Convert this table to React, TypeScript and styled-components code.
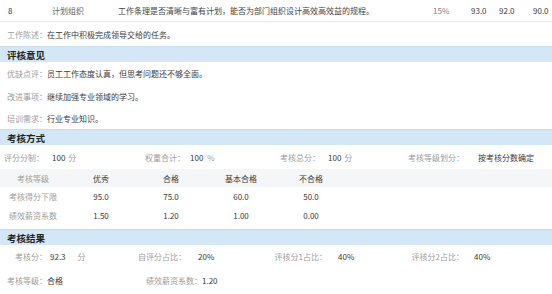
import React from 'react';
import styled, { createGlobalStyle } from 'styled-components';

const GlobalStyle = createGlobalStyle`
  html, body {
    margin: 0;
    padding: 0;
    background: #ffffff;
  }
  body {
    font-family: "Noto Sans CJK SC", "Noto Sans", sans-serif;
    font-size: 8px;
    color: #3a3a3a;
  }
`;

const Page = styled.div`
  width: 552px;
  height: 294px;
  overflow: hidden;
  background: #fff;
`;

const ItemRow = styled.div`
  height: 21px;
  border-bottom: 1px solid #e6e6e6;
  white-space: nowrap;
`;

const ItemCells = styled.div`
  position: relative;
  width: 100%;
  height: 100%;
  display: flex;
  align-items: center;
`;

// cells of the table row whose top is cut off in the screenshot
const ItemCell = styled.span<{ left: number; tone?: string }>`
  position: absolute;
  left: ${({ left }) => left}px;
  color: ${({ tone }) => tone || '#3a3a3a'};
`;

const Line = styled.div<{ h: number }>`
  display: flex;
  align-items: center;
  height: ${({ h }) => h}px;
  padding-left: 7px;
  white-space: nowrap;
`;

const Label = styled.span<{ offset?: number }>`
  margin-left: ${({ offset }) => offset || 0}px;
  color: #9d9d9d;
`;

const Value = styled.span`
  color: #3a3a3a;
`;

const SectionHeader = styled.div<{ h: number }>`
  display: flex;
  align-items: center;
  height: ${({ h }) => h}px;
  padding-left: 7px;
  background: #d3e7f6;
  border-top: 1px solid #c9dcec;
  font-size: 9.5px;
  font-weight: 700;
  color: #222;
`;

const FieldGrid = styled.div<{ cols: string; h: number }>`
  display: grid;
  grid-template-columns: ${({ cols }) => cols};
  align-items: center;
  height: ${({ h }) => h}px;
  white-space: nowrap;
`;

const Field = styled.div`
  display: flex;
  align-items: center;
`;

const FieldLabel = styled.span<{ w: number }>`
  width: ${({ w }) => w}px;
  text-align: right;
  color: #9d9d9d;
`;

const FieldValue = styled.span<{ gap: number }>`
  margin-left: ${({ gap }) => gap}px;
  color: #3a3a3a;
`;

const Unit = styled.span<{ gap: number }>`
  margin-left: ${({ gap }) => gap}px;
  color: #9d9d9d;
`;

const Table = styled.div`
  display: flex;
  flex-direction: column;
  margin-bottom: 4px;
`;

const TableRow = styled.div<{ head?: boolean; h: number }>`
  display: grid;
  grid-template-columns: 66px 70px 70px 70px 70px 1fr;
  align-items: center;
  height: ${({ h }) => h}px;
  background: ${({ head }) => (head ? '#f5f6f7' : 'transparent')};
`;

const TableCell = styled.span<{ muted?: boolean }>`
  text-align: center;
  color: ${({ muted }) => (muted ? '#9d9d9d' : '#3a3a3a')};
`;

const levels = ['优秀', '合格', '基本合格', '不合格'];
const scoreFloor = ['95.0', '75.0', '60.0', '50.0'];
const coefficients = ['1.50', '1.20', '1.00', '0.00'];

export default function App() {
  return (
    <Page>
      <GlobalStyle />
      <ItemRow>
        <ItemCells>
          <ItemCell left={8}>8</ItemCell>
          <ItemCell left={52} tone="#666">计划组织</ItemCell>
          <ItemCell left={118} tone="#444">工作条理是否清晰与富有计划，能否为部门组织设计高效高效益的规程。</ItemCell>
          <ItemCell left={433} tone="#808080">15%</ItemCell>
          <ItemCell left={471}>93.0</ItemCell>
          <ItemCell left={499}>92.0</ItemCell>
          <ItemCell left={533}>90.0</ItemCell>
        </ItemCells>
      </ItemRow>
      <Line h={24}>
        <Label>工作陈述：</Label>
        <Value>在工作中积极完成领导交给的任务。</Value>
      </Line>

      <SectionHeader h={15}>评核意见</SectionHeader>
      <Line h={23}>
        <Label>优缺点评：</Label>
        <Value>员工工作态度认真，但思考问题还不够全面。</Value>
      </Line>
      <Line h={22}>
        <Label>改进事项：</Label>
        <Value>继续加强专业领域的学习。</Value>
      </Line>
      <Line h={22}>
        <Label>培训需求：</Label>
        <Value>行业专业知识。</Value>
      </Line>

      <SectionHeader h={15}>考核方式</SectionHeader>
      <FieldGrid cols="138px 138px 124px 1fr" h={24}>
        <Field>
          <FieldLabel w={44}>评分分制：</FieldLabel>
          <FieldValue gap={8}>100</FieldValue>
          <Unit gap={3}>分</Unit>
        </Field>
        <Field>
          <FieldLabel w={47}>权重合计：</FieldLabel>
          <FieldValue gap={5}>100</FieldValue>
          <Unit gap={4}>%</Unit>
        </Field>
        <Field>
          <FieldLabel w={44}>考核总分：</FieldLabel>
          <FieldValue gap={8}>100</FieldValue>
          <Unit gap={3}>分</Unit>
        </Field>
        <Field>
          <FieldLabel w={64}>考核等级划分：</FieldLabel>
          <FieldValue gap={14}>按考核分数确定</FieldValue>
        </Field>
      </FieldGrid>
      <Table>
        <TableRow head h={18}>
          <TableCell muted>考核等级</TableCell>
          {levels.map((l) => (
            <TableCell key={l}>{l}</TableCell>
          ))}
        </TableRow>
        <TableRow h={19}>
          <TableCell muted>考核得分下限</TableCell>
          {scoreFloor.map((v, i) => (
            <TableCell key={i}>{v}</TableCell>
          ))}
        </TableRow>
        <TableRow h={19}>
          <TableCell muted>绩效薪资系数</TableCell>
          {coefficients.map((v, i) => (
            <TableCell key={i}>{v}</TableCell>
          ))}
        </TableRow>
      </Table>

      <SectionHeader h={15}>考核结果</SectionHeader>
      <FieldGrid cols="126px 140px 138px 1fr" h={22}>
        <Field>
          <FieldLabel w={47}>考核分：</FieldLabel>
          <FieldValue gap={3}>92.3</FieldValue>
          <Unit gap={12}>分</Unit>
        </Field>
        <Field>
          <FieldLabel w={60}>自评分占比：</FieldLabel>
          <FieldValue gap={12}>20%</FieldValue>
        </Field>
        <Field>
          <FieldLabel w={61}>评核分1占比：</FieldLabel>
          <FieldValue gap={11}>40%</FieldValue>
        </Field>
        <Field>
          <FieldLabel w={60}>评核分2占比：</FieldLabel>
          <FieldValue gap={10}>40%</FieldValue>
        </Field>
      </FieldGrid>
      <Line h={26}>
        <Label>考核等级：</Label>
        <Value>合格</Value>
        <Label offset={83}>绩效薪资系数：</Label>
        <Value>1.20</Value>
      </Line>
    </Page>
  );
}
